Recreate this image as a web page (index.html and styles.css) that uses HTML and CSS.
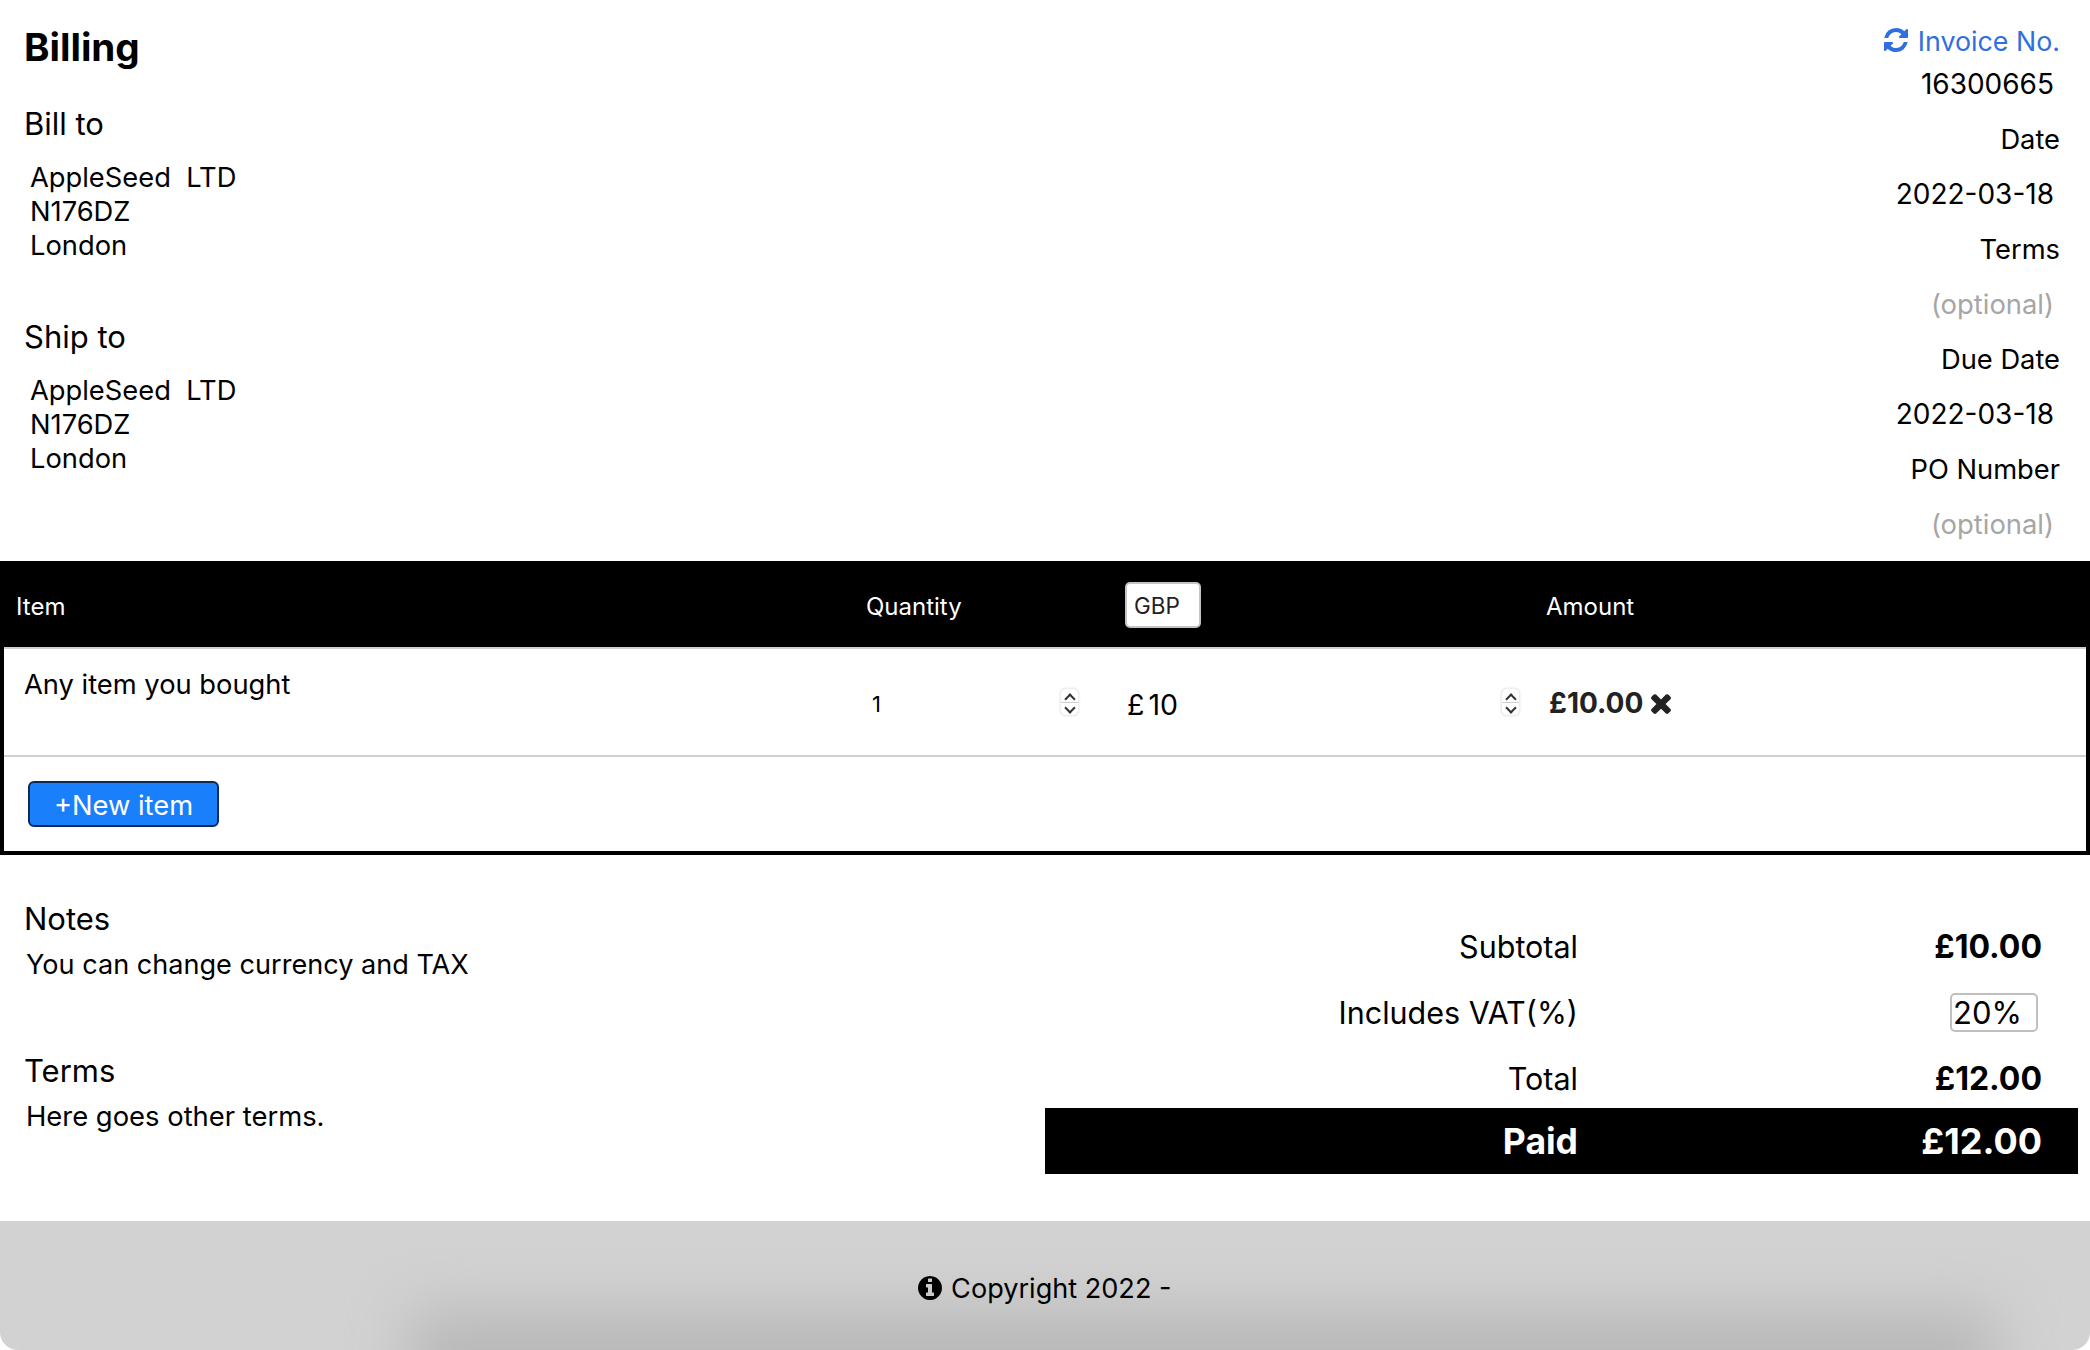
FILE: index.html
```html
<!DOCTYPE html>
<html>
    <head>
        <meta charset="utf-8">
        <title>Billing</title>
        <link rel="stylesheet" href="styles.css">
    </head>
    <body>
        <div class="top">
            <div class="parties">
                <h1 class="title">Billing</h1>
                <div class="party-label">Bill to</div>
                <div class="address">AppleSeed&nbsp; LTD<br>N176DZ<br>London</div>
                <div class="party-label ship">Ship to</div>
                <div class="address">AppleSeed&nbsp; LTD<br>N176DZ<br>London</div>
            </div>
            <div class="meta">
                <div class="meta-label invoice">
                    <svg class="icon-sync" viewBox="0 0 1792 1792"><path fill="currentColor" d="M1639 1056q0 5-1 7-64 268-268 434.500t-478 166.500q-146 0-282.500-55t-243.500-157l-129 129q-19 19-45 19t-45-19-19-45v-448q0-26 19-45t45-19h448q26 0 45 19t19 45-19 45l-137 137q71 66 161 102t187 36q134 0 250-65t186-179q11-17 53-117 8-23 30-23h192q13 0 22.500 9.500t9.500 22.500zm25-800v448q0 26-19 45t-45 19h-448q-26 0-45-19t-19-45 19-45l138-138q-148-137-349-137-134 0-250 65t-186 179q-11 17-53 117-8 23-30 23h-199q-13 0-22.500-9.500t-9.500-22.500v-7q65-268 270-434.500t480-166.500q146 0 284 55.500t245 156.500l130-129q19-19 45-19t45 19 19 45z"/></svg>
                    Invoice No.
                </div>
                <div class="meta-value">16300665</div>
                <div class="meta-label">Date</div>
                <div class="meta-value">2022-03-18</div>
                <div class="meta-label">Terms</div>
                <div class="meta-value muted">(optional)</div>
                <div class="meta-label">Due Date</div>
                <div class="meta-value">2022-03-18</div>
                <div class="meta-label">PO Number</div>
                <div class="meta-value muted">(optional)</div>
            </div>
        </div>

        <div class="items">
            <div class="items-head">
                <div class="col-item">Item</div>
                <div class="col-qty">Quantity</div>
                <div class="col-price"><span class="currency">GBP</span></div>
                <div class="col-amount">Amount</div>
            </div>
            <div class="items-row">
                <div class="col-item item-name">Any item you bought</div>
                <div class="col-qty qty-cell">
                    <span>1</span>
                    <span class="spinner"><i class="up"></i><i class="down"></i></span>
                </div>
                <div class="col-price price-cell">
                    <span class="price-value">£ 10</span>
                    <span class="spinner"><i class="up"></i><i class="down"></i></span>
                </div>
                <div class="col-amount amount-cell">
                    £10.00
                    <svg class="icon-times" viewBox="0 0 1792 1792"><path fill="currentColor" d="M1490 1322q0 40-28 68l-136 136q-28 28-68 28t-68-28l-294-294-294 294q-28 28-68 28t-68-28l-136-136q-28-28-28-68t28-68l294-294-294-294q-28-28-28-68t28-68l136-136q28-28 68-28t68 28l294 294 294-294q28-28 68-28t68 28l136 136q28 28 28 68t-28 68l-294 294 294 294q28 28 28 68z"/></svg>
                </div>
            </div>
            <div class="items-foot">
                <button class="new-item">+New item</button>
            </div>
        </div>

        <div class="bottom">
            <div class="notes">
                <div class="party-label">Notes</div>
                <div class="note-text">You can change currency and TAX</div>
                <div class="party-label terms-label">Terms</div>
                <div class="note-text">Here goes other terms.</div>
            </div>
            <div class="summary">
                <div class="sum-row">
                    <div class="sum-label">Subtotal</div>
                    <div class="sum-value">£10.00</div>
                </div>
                <div class="sum-row">
                    <div class="sum-label">Includes VAT(%)</div>
                    <div class="sum-value"><span class="vat-box">20%</span></div>
                </div>
                <div class="sum-row">
                    <div class="sum-label">Total</div>
                    <div class="sum-value">£12.00</div>
                </div>
                <div class="sum-row paid">
                    <div class="sum-label">Paid</div>
                    <div class="sum-value">£12.00</div>
                </div>
            </div>
        </div>

        <div class="footer">
            <div class="footer-shade"></div>
            <div class="footer-text">
                <svg class="icon-info" viewBox="0 0 1792 1792"><path fill="currentColor" d="M1152 1376v-160q0-14-9-23t-23-9h-96v-512q0-14-9-23t-23-9h-320q-14 0-23 9t-9 23v160q0 14 9 23t23 9h96v320h-96q-14 0-23 9t-9 23v160q0 14 9 23t23 9h448q14 0 23-9t9-23zm-128-896v-160q0-14-9-23t-23-9h-192q-14 0-23 9t-9 23v160q0 14 9 23t23 9h192q14 0 23-9t9-23zm640 416q0 209-103 385.500t-279.500 279.500-385.500 103-385.500-103-279.500-279.500-103-385.500 103-385.500 279.500-279.500 385.500-103 385.500 103 279.500 279.500 103 385.500z"/></svg>
                Copyright 2022 -
            </div>
        </div>
    </body>
</html>
```

FILE: styles.css
```css
* {
    box-sizing: border-box;
}
html, body {
    height: 100%;
}
body {
    margin: 0;
    background-color: white;
    color: black;
    font-family: Inter, "Noto Sans", sans-serif;
    font-size: 27.3px;
    overflow: hidden;
}
.top {
    display: flex;
    justify-content: space-between;
    height: 561px;
}
.parties {
    padding: 22px 0 0 24px;
}
.title {
    margin: 0;
    font-size: 38.6px;
    line-height: 50px;
    font-weight: 700;
}
.party-label {
    font-size: 31px;
    line-height: 40px;
}
.title + .party-label {
    margin-top: 32px;
}
.address {
    margin: 17px 0 0 6px;
    line-height: 34px;
}
.ship {
    margin-top: 54px;
}
.meta {
    padding: 13px 30px 0 0;
    text-align: right;
}
.meta-label, .meta-value {
    line-height: 55px;
}
.meta-label.invoice {
    line-height: 56px;
    font-size: 26.8px;
    color: #2f6fde;
}
.invoice + .meta-value {
    line-height: 30px;
    margin-bottom: 13px;
}
.meta-value {
    padding-right: 6px;
    font-size: 28px;
}
.muted {
    font-size: 27.4px;
    color: #a6a6a6;
}
.icon-sync {
    width: 28px;
    height: 28px;
    vertical-align: -3px;
}

.items {
    height: 294px;
    border: 4px solid black;
    border-top: none;
}
.items-head {
    display: grid;
    grid-template-columns: 846px 279px 420px 1fr;
    align-items: center;
    height: 86px;
    margin: 0 -4px;
    padding-top: 5px;
    background-color: black;
    color: white;
    font-size: 24px;
}
.items-head .col-item {
    padding-left: 16px;
}
.items-head .col-qty {
    padding-left: 20px;
}
.items-head .col-amount {
    padding-left: 1px;
}
.currency {
    display: inline-block;
    width: 76px;
    height: 46px;
    margin-top: -3px;
    padding-left: 7px;
    border: 2px solid #c4c4c4;
    border-radius: 5px;
    background-color: white;
    color: #222;
    line-height: 44px;
    font-size: 22.5px;
    vertical-align: middle;
}
.items-row {
    display: grid;
    grid-template-columns: 842px 279px 420px 1fr;
    height: 110px;
    border-top: 2px solid #d0d0d0;
    border-bottom: 2px solid #d0d0d0;
}
.item-name {
    padding: 19px 0 0 20px;
}
.qty-cell, .price-cell, .amount-cell {
    display: flex;
    align-items: center;
    height: 106px;
}
.qty-cell span:first-child, .price-value {
    padding-top: 4px;
}
.qty-cell {
    justify-content: space-between;
    padding: 0 46px 0 26px;
    font-size: 22px;
}
.price-cell {
    justify-content: space-between;
    padding: 0 25px 0 2px;
}
.price-value {
    font-size: 28.5px;
    word-spacing: -4px;
}
.amount-cell {
    gap: 3px;
    padding: 2px 0 0 4px;
    font-size: 28px;
    font-weight: 700;
    color: #222;
}
.spinner {
    display: flex;
    flex-direction: column;
    width: 19px;
    height: 28px;
    border: 1px solid #eee;
    border-radius: 6px;
    background-color: white;
    box-shadow: 0 0 2px rgba(0, 0, 0, 0.15);
}
.spinner i {
    position: relative;
    flex: 1;
}
.spinner .up {
    border-bottom: 1px solid #cfcfcf;
}
.spinner i::after {
    content: "";
    position: absolute;
    left: 5px;
    width: 6px;
    height: 6px;
    border-left: 2px solid #333;
    border-top: 2px solid #333;
}
.spinner .up::after {
    top: 6px;
    transform: rotate(45deg);
}
.spinner .down::after {
    top: 1px;
    transform: rotate(225deg);
}
.icon-times {
    width: 30px;
    height: 30px;
}
.items-foot {
    padding: 24px 0 0 24px;
}
.new-item {
    width: 191px;
    height: 46px;
    padding: 2px 0 0;
    border: 2px solid #0b2a52;
    border-radius: 6px;
    background-color: #1a7ffb;
    color: white;
    font-family: inherit;
    font-size: 27.3px;
}

.bottom {
    display: flex;
    justify-content: space-between;
    height: 366px;
    padding-right: 12px;
}
.notes {
    padding: 44px 0 0 24px;
}
.note-text {
    margin: 9px 0 0 2px;
    font-size: 27.1px;
    line-height: 34px;
}
.terms-label {
    margin-top: 69px;
}
.terms-label + .note-text {
    margin-top: 8px;
    font-size: 27.4px;
}
.summary {
    width: 1033px;
    padding-top: 55px;
}
.sum-row {
    display: flex;
    justify-content: space-between;
    align-items: center;
    height: 66px;
    padding: 7px 36px 0 0;
}
.sum-label {
    width: 533px;
    font-size: 30.5px;
    text-align: right;
}
.sum-value {
    font-size: 32px;
    font-weight: 700;
}
.vat-box {
    display: inline-block;
    width: 88px;
    height: 39px;
    margin-right: 4px;
    padding-left: 1px;
    border: 2px solid #c0c0c0;
    border-radius: 5px;
    font-size: 31px;
    font-weight: 400;
    line-height: 36px;
}
.paid {
    padding-top: 0;
    background-color: black;
    color: white;
    font-weight: 700;
}
.paid .sum-label {
    font-size: 35.5px;
}
.paid .sum-value {
    font-size: 36px;
}

.footer {
    position: relative;
    height: 129px;
    padding: 47px 3px 0 0;
    border-bottom-left-radius: 18px;
    border-bottom-right-radius: 18px;
    background-color: #d2d2d2;
    text-align: center;
    line-height: 42px;
    font-size: 27.1px;
    overflow: hidden;
}
.footer-text {
    position: relative;
}
/* soft shadow along the bottom edge */
.footer-shade {
    position: absolute;
    left: 410px;
    right: 95px;
    bottom: -100px;
    height: 140px;
    background: #b8b8b8;
    filter: blur(30px);
}
.icon-info {
    width: 28px;
    height: 28px;
    vertical-align: -4px;
}
```
